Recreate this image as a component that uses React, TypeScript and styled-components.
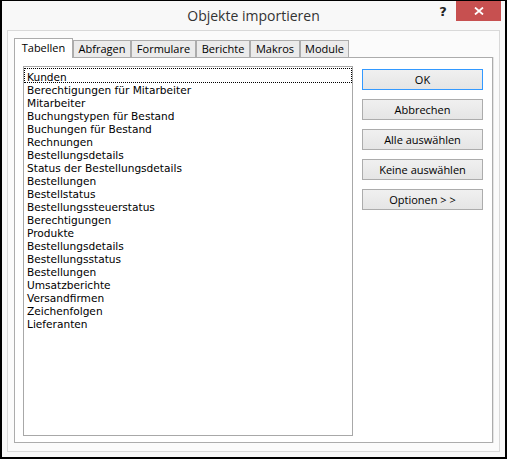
import React from "react";
import styled, { createGlobalStyle } from "styled-components";

const GlobalStyle = createGlobalStyle`
  html, body { margin: 0; padding: 0; background: #ffffff; }
  *, *::before, *::after { box-sizing: border-box; }
`;

const Window = styled.div`
  width: 507px;
  height: 459px;
  border: 2px solid #000000;
  border-top-width: 1px;
  background: #f8f8f8;
  display: flex;
  flex-direction: column;
`;

const TitleBar = styled.div`
  height: 29px;
  flex: none;
  display: grid;
  grid-template-columns: 1fr auto 1fr;
  padding: 0 4px;
`;

const Title = styled.div`
  grid-column: 2;
  font-family: "Open Sans", "Noto Sans", sans-serif;
  font-size: 14px;
  line-height: 29px;
  color: #333333;
  white-space: nowrap;
`;

const Controls = styled.div`
  grid-column: 3;
  justify-self: end;
  align-self: start;
  display: flex;
`;

const HelpButton = styled.div`
  width: 26px;
  height: 20px;
  padding-top: 2px;
  text-align: center;
  font-family: "DejaVu Sans", sans-serif;
  font-weight: bold;
  font-size: 13px;
  line-height: 18px;
  color: #222222;
`;

const CloseButton = styled.div`
  width: 45px;
  height: 20px;
  background: #c75050;
  display: flex;
  align-items: center;
  justify-content: center;
`;

const FrameBody = styled.div`
  flex: 1;
  display: flex;
  padding: 0 5px 5px;
`;

const Client = styled.div`
  flex: 1;
  display: flex;
  flex-direction: column;
  border: 1px solid #d9d9d9;
  background: #fbfbfb;
  padding: 7px 6px 8px 6px;
`;

const TabStrip = styled.div`
  height: 20px;
  flex: none;
  display: flex;
  align-items: flex-end;
  margin-bottom: -1px;
  position: relative;
  z-index: 1;
`;

const Tab = styled.div<{ $w: number; $active?: boolean }>`
  width: ${(p) => p.$w}px;
  height: ${(p) => (p.$active ? 20 : 18)}px;
  border: 1px solid #acacac;
  border-bottom: ${(p) => (p.$active ? "none" : "1px solid #acacac")};
  background: ${(p) => (p.$active ? "#ffffff" : "#ebebeb")};
  font-family: "Open Sans", "Noto Sans", sans-serif;
  font-size: 11px;
  line-height: ${(p) => (p.$active ? 18 : 16)}px;
  color: #000000;
  text-align: center;
  white-space: nowrap;
`;

const Panel = styled.div`
  flex: 1;
  display: flex;
  gap: 9px;
  border: 1px solid #acacac;
  background: #ffffff;
  padding: 8px 8px 6px 8px;
  box-shadow: 1px 0 0 #e4e4e4;
`;

const ListBox = styled.div`
  width: 330px;
  flex: none;
  border: 1px solid #a8a8a8;
  padding-top: 2px;
  background: #ffffff;
`;

const Item = styled.div<{ $focused?: boolean }>`
  margin: 0 1px;
  height: 13px;
  padding: 2px 0 0 2px;
  font-family: "DejaVu Sans", sans-serif;
  font-size: 10.6px;
  line-height: 13px;
  color: #000000;
  white-space: nowrap;
  outline: ${(p) => (p.$focused ? "1px dotted #000000" : "none")};
`;

const ButtonColumn = styled.div`
  width: 121px;
  flex: none;
  display: flex;
  flex-direction: column;
  gap: 9px;
  padding-top: 3px;
`;

const Button = styled.button<{ $default?: boolean }>`
  height: 21px;
  padding: 0;
  margin: 0;
  border: 1px solid ${(p) => (p.$default ? "#3399ff" : "#acacac")};
  background: linear-gradient(#f0f0f0, #e5e5e5);
  font-family: "Open Sans", "Noto Sans", sans-serif;
  font-size: 11px;
  line-height: 19px;
  color: #000000;
  text-align: center;
`;

const tabs = [
  { label: "Tabellen", w: 59 },
  { label: "Abfragen", w: 58 },
  { label: "Formulare", w: 65 },
  { label: "Berichte", w: 54 },
  { label: "Makros", w: 50 },
  { label: "Module", w: 49 },
];

const tables = [
  "Kunden",
  "Berechtigungen für Mitarbeiter",
  "Mitarbeiter",
  "Buchungstypen für Bestand",
  "Buchungen für Bestand",
  "Rechnungen",
  "Bestellungsdetails",
  "Status der Bestellungsdetails",
  "Bestellungen",
  "Bestellstatus",
  "Bestellungssteuerstatus",
  "Berechtigungen",
  "Produkte",
  "Bestellungsdetails",
  "Bestellungsstatus",
  "Bestellungen",
  "Umsatzberichte",
  "Versandfirmen",
  "Zeichenfolgen",
  "Lieferanten",
];

const buttons = ["OK", "Abbrechen", "Alle auswählen", "Keine auswählen", "Optionen > >"];

export default function App() {
  return (
    <>
      <GlobalStyle />
      <Window>
        <TitleBar>
          <Title>Objekte importieren</Title>
          <Controls>
            <HelpButton>?</HelpButton>
            <CloseButton>
              <svg width="10" height="8" viewBox="0 0 10 8">
                <path d="M1 0.5 L9 7.5 M9 0.5 L1 7.5" stroke="#ffffff" strokeWidth="1.8" fill="none" />
              </svg>
            </CloseButton>
          </Controls>
        </TitleBar>
        <FrameBody>
          <Client>
            <TabStrip>
              {tabs.map((t, i) => (
                <Tab key={t.label} $w={t.w} $active={i === 0}>
                  {t.label}
                </Tab>
              ))}
            </TabStrip>
            <Panel>
              <ListBox>
                {tables.map((name, i) => (
                  <Item key={i} $focused={i === 0}>
                    {name}
                  </Item>
                ))}
              </ListBox>
              <ButtonColumn>
                {buttons.map((b, i) => (
                  <Button key={b} $default={i === 0}>
                    {b}
                  </Button>
                ))}
              </ButtonColumn>
            </Panel>
          </Client>
        </FrameBody>
      </Window>
    </>
  );
}
